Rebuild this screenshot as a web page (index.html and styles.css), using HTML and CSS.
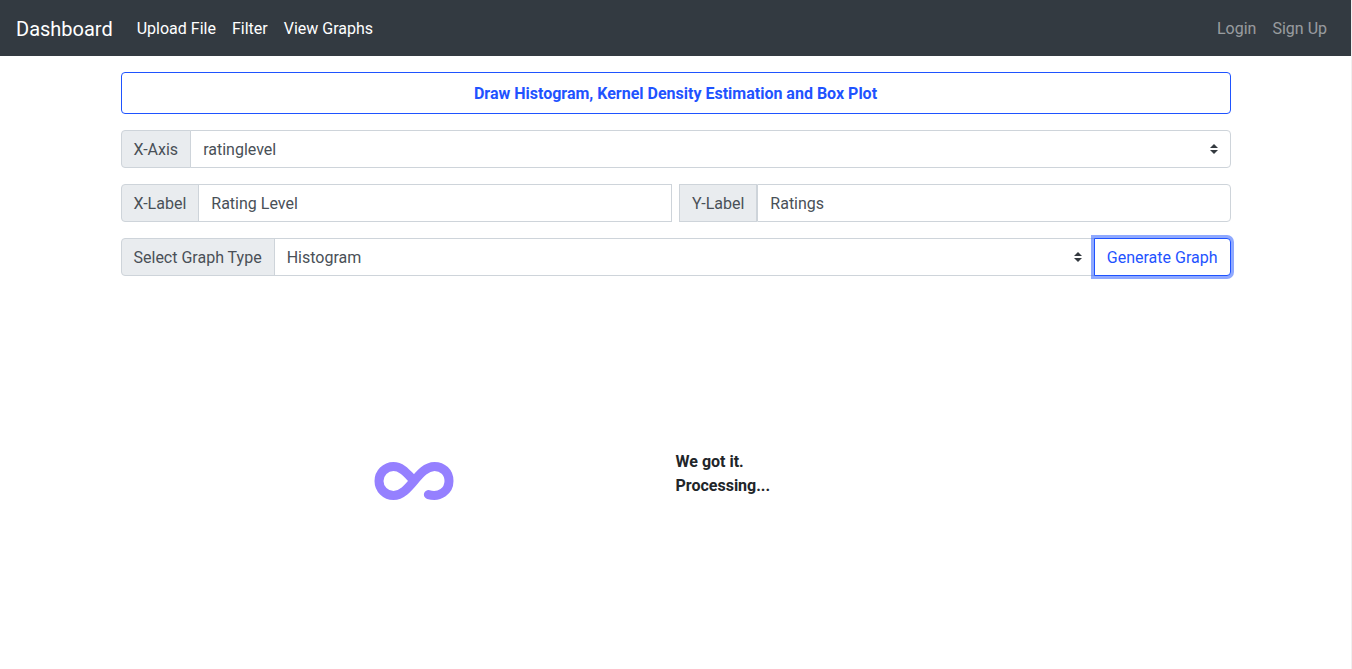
FILE: index.html
```html
<!DOCTYPE html>
<html lang="en">
<head>
<meta charset="utf-8">
<title>Dashboard</title>
<link rel="stylesheet" href="styles.css">
</head>
<body>
<nav class="navbar">
  <a class="brand">Dashboard</a>
  <div class="links"><a>Upload File</a><a>Filter</a><a>View Graphs</a></div>
  <div class="links account"><a>Login</a><a>Sign Up</a></div>
</nav>
<main class="container">
  <div class="title">Draw Histogram, Kernel Density Estimation and Box Plot</div>
  <div class="group">
    <span class="label">X-Axis</span>
    <div class="field select last">ratinglevel<svg class="caret" viewBox="0 0 4 5"><path d="M2 0L0 2h4zm0 5L0 3h4z"/></svg></div>
  </div>
  <div class="pair">
    <div class="group"><span class="label">X-Label</span><div class="field">Rating Level</div></div>
    <div class="group"><span class="label square">Y-Label</span><div class="field last adjacent">Ratings</div></div>
  </div>
  <div class="group">
    <span class="label">Select Graph Type</span>
    <div class="field select">Histogram<svg class="caret" viewBox="0 0 4 5"><path d="M2 0L0 2h4zm0 5L0 3h4z"/></svg></div>
    <button class="generate">Generate Graph</button>
  </div>
  <div class="status">
    <div class="loader"><svg class="infinity" viewBox="0 0 80 40"><path d="M54.4 33.6C66 37 75 29.5 75 20C75 11 68.5 5.5 60.5 5.5C44 5.5 36 34.5 19.5 34.5C11.5 34.5 5 28 5 20C5 12 11.5 5.5 19.5 5.5C27.5 5.5 33 12.5 39.2 18.8"/></svg></div>
    <div class="message">We got it.<br>Processing...</div>
  </div>
</main>
</body>
</html>
```
FILE: styles.css
```css
* { box-sizing: border-box; }
body { margin: 0; font: 16px/24px Roboto, sans-serif; color: #212529; background: #fff; border-right: 1px solid #f0f0f0; min-height: 669px; }
.navbar { height: 56px; padding: 2px 16px 0; background: #333a41; color: #fff; display: flex; align-items: center; }
.brand { font-size: 20px; line-height: 30px; margin-right: 16px; }
.links { display: flex; }
.links a { padding: 8px; }
.account { margin-left: auto; color: rgba(255,255,255,.5); }
.container { width: 1110px; margin: 16px auto 0; display: flex; flex-direction: column; gap: 16px; }
.title { height: 42px; padding-top: 1px; border: 1px solid #1f53ff; border-radius: 4px; color: #1f53ff; font-weight: 700; text-align: center; line-height: 40px; }
.group { display: flex; height: 38px; flex: 1 1 0; }
.container > .group { flex: none; }
.label { padding: 7px 12px 5px; background: #e9ecef; border: 1px solid #ced4da; border-radius: 4px 0 0 4px; color: #495057; white-space: nowrap; }
.square { border-radius: 0; }
.field { flex: 1; margin-left: -1px; padding: 7px 12px 5px; border: 1px solid #ced4da; color: #495057; background: #fff; }
.adjacent { margin-left: 0; }
.last { border-radius: 0 4px 4px 0; }
.select { display: flex; justify-content: space-between; align-items: flex-start; }
.caret { width: 8px; height: 10px; margin-top: 6px; fill: #343a40; }
.pair { display: flex; gap: 7px; }
.generate { margin-left: -1px; padding: 7px 12px 5px; font: inherit; color: #1f53ff; background: #fff; border: 1px solid #1f53ff; border-radius: 0 4px 4px 0; box-shadow: 0 0 0 3px rgba(31,83,255,.5); position: relative; }
.status { display: flex; margin-top: 157px; }
.loader { width: 555px; padding: 12px 0 0 253.5px; }
.infinity { display: block; width: 80px; height: 40px; fill: none; stroke: #9580ff; stroke-width: 9; stroke-linecap: round; }
.message { padding-top: 1px; font-weight: 700; }
```
